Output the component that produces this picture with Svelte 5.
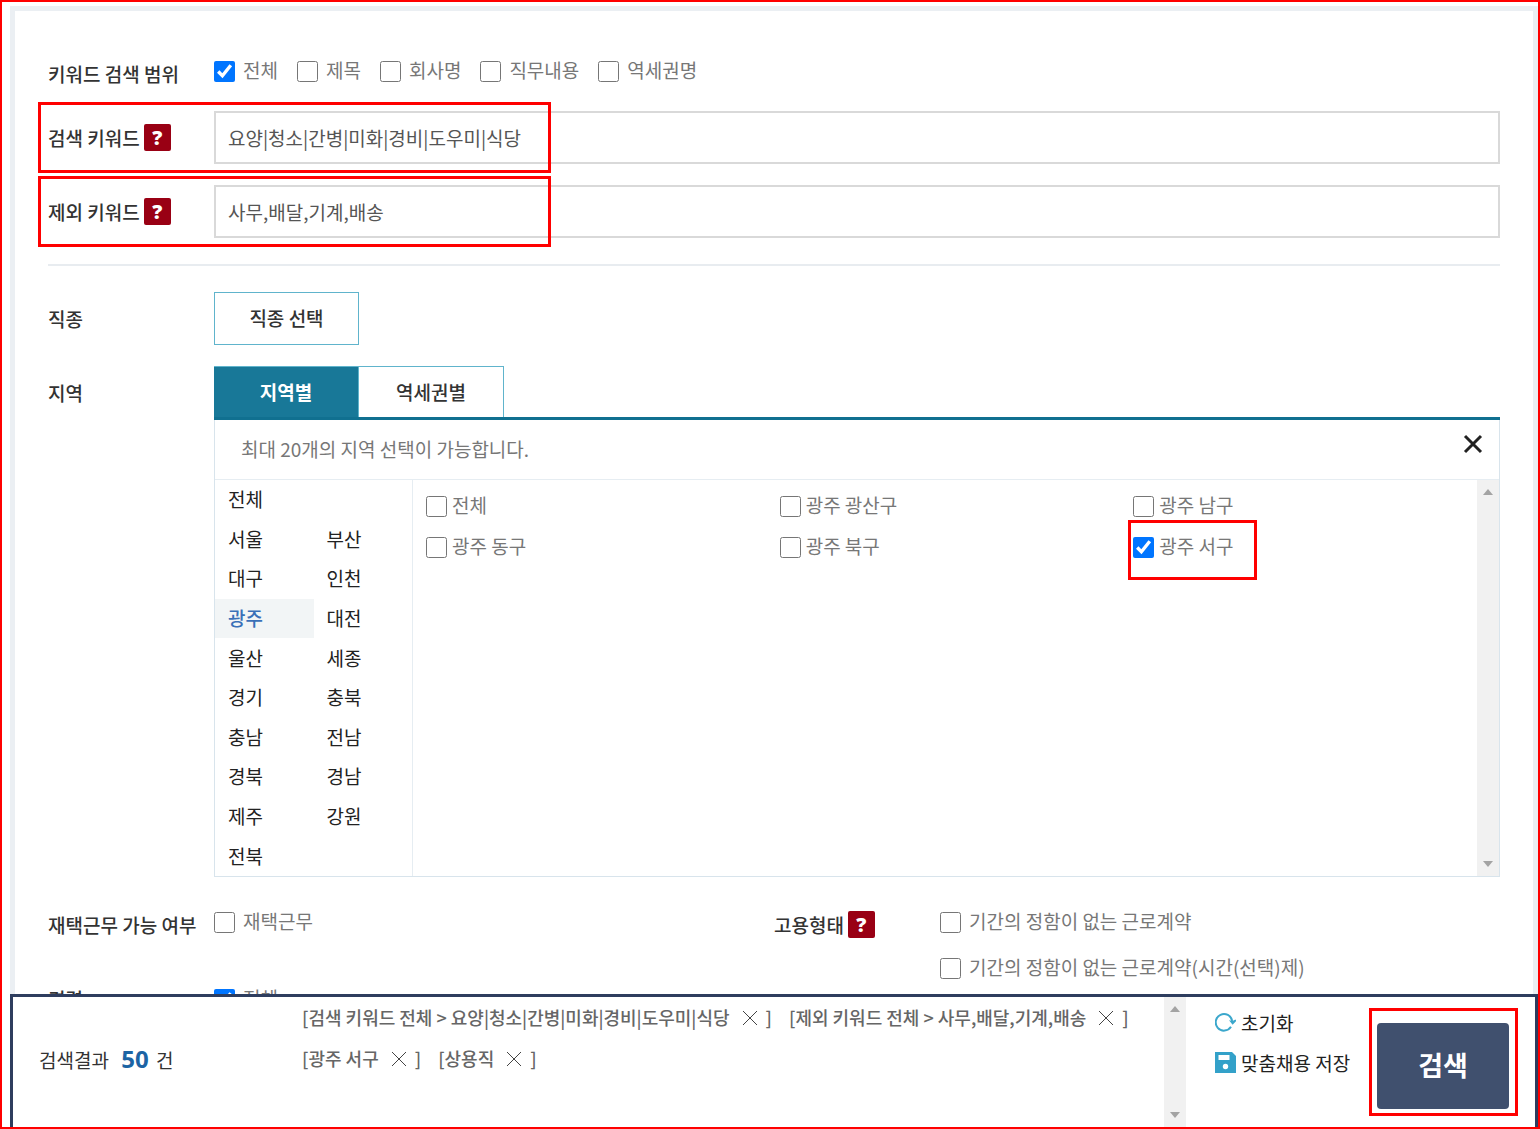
<script>
  let scopes = $state([
    { name: '전체', checked: true },
    { name: '제목', checked: false },
    { name: '회사명', checked: false },
    { name: '직무내용', checked: false },
    { name: '역세권명', checked: false }
  ]);

  let keyword = $state('요양|청소|간병|미화|경비|도우미|식당');
  let excluded = $state('사무,배달,기계,배송');
  let tab = $state('지역별');
  let region = $state('광주');

  const regions = [
    ['전체'],
    ['서울', '부산'],
    ['대구', '인천'],
    ['광주', '대전'],
    ['울산', '세종'],
    ['경기', '충북'],
    ['충남', '전남'],
    ['경북', '경남'],
    ['제주', '강원'],
    ['전북']
  ];

  let districts = $state([
    { name: '전체', checked: false },
    { name: '광주 광산구', checked: false },
    { name: '광주 남구', checked: false },
    { name: '광주 동구', checked: false },
    { name: '광주 북구', checked: false },
    { name: '광주 서구', checked: true, marked: true }
  ]);

  const contracts = ['기간의 정함이 없는 근로계약', '기간의 정함이 없는 근로계약(시간(선택)제)'];

  let tags = $state([
    '검색 키워드 전체 > 요양|청소|간병|미화|경비|도우미|식당',
    '제외 키워드 전체 > 사무,배달,기계,배송',
    '광주 서구',
    '상용직'
  ]);
</script>

{#snippet help()}
  <button class='help' type='button' aria-label='도움말'>?</button>
{/snippet}

{#snippet scrollbar()}
  <div class='scrollbar' aria-hidden='true'>
    <svg width='10' height='6' viewBox='0 0 10 6'><path d='M0 6 5 0l5 6z' /></svg>
    <svg width='10' height='6' viewBox='0 0 10 6'><path d='M0 0h10L5 6z' /></svg>
  </div>
{/snippet}

<div class='frame'>
  <main class='panel'>
    <div class='row row-checks row-scope'>
      <div class='label'>키워드 검색 범위</div>
      <div class='checks'>
        {#each scopes as scope}
          <label class='check'><input type='checkbox' bind:checked={scope.checked} />{scope.name}</label>
        {/each}
      </div>
    </div>

    <div class='row'>
      <div class='label'><label for='keyword'>검색 키워드</label>{@render help()}</div>
      <input class='text' id='keyword' type='text' bind:value={keyword} />
      <div class='mark mark-row'></div>
    </div>

    <div class='row'>
      <div class='label'><label for='excluded'>제외 키워드</label>{@render help()}</div>
      <input class='text' id='excluded' type='text' bind:value={excluded} />
      <div class='mark mark-row'></div>
    </div>

    <hr />

    <div class='row'>
      <div class='label'>직종</div>
      <button class='select-job' type='button'>직종 선택</button>
    </div>

    <div class='row row-region'>
      <div class='label'>지역</div>
      <div class='region'>
        <div class='tabs'>
          {#each ['지역별', '역세권별'] as name}
            <button class='tab' class:active={tab === name} type='button' onclick={() => (tab = name)}>{name}</button>
          {/each}
        </div>
        <div class='region-box'>
          <div class='region-head'>
            <span>최대 20개의 지역 선택이 가능합니다.</span>
            <button class='close' type='button' aria-label='닫기'>
              <svg width='20' height='20' viewBox='0 0 20 20'><path d='M2 2 18 18M18 2 2 18' /></svg>
            </button>
          </div>
          <div class='region-body'>
            <div class='cities'>
              {#each regions as line}
                <div class='cities-line'>
                  {#each line as name}
                    <button class='city' class:active={region === name} type='button' onclick={() => (region = name)}>{name}</button>
                  {/each}
                </div>
              {/each}
            </div>
            <div class='districts'>
              {#each districts as district}
                <div class='district'>
                  <label class='check'><input type='checkbox' bind:checked={district.checked} />{district.name}</label>
                  {#if district.marked}
                    <div class='mark mark-district'></div>
                  {/if}
                </div>
              {/each}
            </div>
            {@render scrollbar()}
          </div>
        </div>
      </div>
    </div>

    <div class='columns'>
      <div class='row row-checks'>
        <div class='label'>재택근무 가능 여부</div>
        <label class='check'><input type='checkbox' />재택근무</label>
      </div>
      <div class='row row-checks'>
        <div class='label'>고용형태{@render help()}</div>
        <div class='contracts'>
          {#each contracts as contract}
            <label class='check'><input type='checkbox' />{contract}</label>
          {/each}
        </div>
      </div>
      <div class='row row-checks row-career'>
        <div class='label'>경력</div>
        <label class='check'><input type='checkbox' checked />전체</label>
      </div>
    </div>
  </main>

  <footer class='bar'>
    <div class='count'>검색결과 <strong>50</strong> 건</div>
    <div class='tags'>
      {#each tags as tag, i}
        <span class='tag'>
          [{tag}
          <button class='tag-remove' type='button' aria-label='삭제' onclick={() => tags.splice(i, 1)}>
            <svg width='14' height='14' viewBox='0 0 14 14'><path d='M0 0 14 14M14 0 0 14' /></svg>
          </button>]
        </span>
      {/each}
    </div>
    {@render scrollbar()}
    <div class='tools'>
      <button class='tool' type='button'>
        <svg width='21' height='21' viewBox='0 0 21 21'>
          <path d='M16 14.800A8.300 8.300 0 1 1 17.200 9' fill='none' stroke='#3ba7cc' stroke-width='2' />
          <path d='M14 8.300 17.500 9 20.500 7.500 21.500 8.800 17.600 12.800z' fill='#3ba7cc' />
        </svg>
        초기화
      </button>
      <button class='tool' type='button'>
        <svg width='21' height='21' viewBox='0 0 21 21'>
          <path d='M0 0h17l4 4v17H0z' fill='#33a1c9' />
          <path d='M3.500 3h11v5h-11z' fill='#fff' />
          <circle cx='10.500' cy='14.500' r='2.700' fill='#fff' />
        </svg>
        맞춤채용 저장
      </button>
    </div>
    <div class='submit'>
      <button class='search' type='submit'>검색</button>
      <div class='mark mark-search'></div>
    </div>
  </footer>
</div>

<style>
  :global(body) {
    margin: 0;
    background-color: #fff;
  }

  .frame {
    display: flex;
    flex-direction: column;
    box-sizing: border-box;
    height: 100vh;
    padding: 4px 0 0 8px;
    border: 2px solid #f00;
    font-family: 'Noto Sans CJK KR', 'Noto Sans', sans-serif;
    font-size: 19px;
    line-height: 27px;
    color: #333;
  }

  button,
  input {
    font: inherit;
    color: inherit;
  }

  button {
    padding: 0 0 2px;
    border: 0;
    background: none;
    cursor: pointer;
  }

  svg {
    display: block;
  }

  .panel {
    flex: 1;
    min-height: 0;
    overflow: hidden;
    padding: 43px 33px 0;
    border: 5px solid #ebeff3;
    border-bottom: 0;
  }

  .row {
    display: grid;
    grid-template-columns: 166px 1fr;
    align-items: center;
    position: relative;
    margin-bottom: 21px;
  }

  .row-checks {
    align-items: start;
    margin-bottom: 0;
  }

  .row-scope {
    padding: 7px 0 8px;
    margin-bottom: 21px;
  }

  .row-region {
    align-items: start;
    margin-bottom: 35px;
  }

  .label {
    display: flex;
    align-items: center;
    gap: 4px;
    font-weight: 500;
    white-space: nowrap;
  }

  .row-checks .label {
    height: 25px;
    margin-bottom: -4px;
  }

  .row-career .label {
    height: 19px;
  }

  .row-region > .label {
    height: 52px;
  }

  .help {
    width: 27px;
    height: 27px;
    padding: 0;
    border-radius: 2px;
    background-color: #990014;
    font-family: 'Open Sans', sans-serif;
    font-weight: 800;
    font-size: 20px;
    line-height: 27px;
    color: #fff;
  }

  .checks {
    display: flex;
    gap: 19px;
  }

  .check {
    display: flex;
    align-items: flex-start;
    gap: 8px;
    height: 21px;
    line-height: 17px;
    color: #777;
    white-space: nowrap;
  }

  .check input {
    flex: none;
    width: 21px;
    height: 21px;
    margin: 0;
  }

  .text {
    box-sizing: border-box;
    width: 100%;
    height: 53px;
    padding: 0 12px;
    border: 2px solid #d9d9d9;
    outline: 0;
    color: #555;
  }

  .mark {
    position: absolute;
    border: 3px solid #f00;
    pointer-events: none;
  }

  .mark-row {
    top: -9px;
    bottom: -9px;
    left: -10px;
    width: 507px;
  }

  hr {
    margin: 26px 0;
    border: 0;
    border-top: 2px solid #e8ecf0;
  }

  .select-job {
    box-sizing: border-box;
    width: 145px;
    height: 53px;
    border: 1px solid #60b4cc;
    font-weight: 500;
  }

  .tabs {
    display: flex;
    height: 51px;
    border-bottom: 3px solid #107090;
  }

  .tab {
    box-sizing: border-box;
    width: 145px;
    border: 1px solid #60b4cc;
    border-width: 1px 1px 0 0;
    font-weight: 500;
  }

  .tab.active {
    background-color: #187898;
    font-weight: 700;
    color: #fff;
  }

  .region-box {
    border: 1px solid #d8e4ec;
    border-top: 0;
  }

  .region-head {
    display: flex;
    justify-content: space-between;
    align-items: center;
    height: 57px;
    padding: 0 16px 2px 26px;
    border-bottom: 1px solid #e6edf2;
    color: #777;
  }

  .close {
    padding-bottom: 10px;
  }

  .close path {
    stroke: #222;
    stroke-width: 3;
  }

  .region-body {
    display: grid;
    grid-template-columns: 198px 1fr 22px;
    height: 396px;
  }

  .cities {
    display: grid;
    grid-auto-rows: 1fr;
    border-right: 1px solid #e6edf2;
    color: #222;
  }

  .cities-line {
    display: grid;
    grid-template-columns: 1fr 1fr;
  }

  .city {
    padding-left: 13px;
    text-align: left;
  }

  .city.active {
    background-color: #f2f5f6;
    font-weight: 500;
    color: #3a70b8;
  }

  .districts {
    display: grid;
    grid-template-columns: repeat(3, 1fr);
    grid-auto-rows: 41px;
    padding: 6px 3px 0 0;
  }

  .district {
    display: flex;
    align-items: center;
    position: relative;
    padding-left: 13px;
  }

  .district .check {
    gap: 5px;
  }

  .mark-district {
    top: -7px;
    left: 8px;
    width: 123px;
    height: 54px;
  }

  .scrollbar {
    box-sizing: border-box;
    display: flex;
    flex-direction: column;
    justify-content: space-between;
    align-items: center;
    width: 22px;
    padding: 9px 0;
    background-color: #f1f1f1;
  }

  .scrollbar path {
    fill: #a3a3a3;
  }

  .columns {
    display: grid;
    grid-template-columns: 1fr 1fr;
    row-gap: 10px;
  }

  .contracts {
    display: grid;
    gap: 25px;
  }

  .bar {
    display: flex;
    box-sizing: border-box;
    height: 133px;
    padding: 0 26px;
    border: 3px solid #2e3d5e;
    border-bottom: 0;
    background-color: #fff;
  }

  .count {
    align-self: center;
    width: 263px;
    padding-bottom: 7px;
    white-space: pre;
  }

  .count strong {
    margin: 0 3px 0 8px;
    font-family: 'Open Sans', sans-serif;
    font-size: 24px;
    color: #1c64a4;
  }

  .tags {
    display: flex;
    flex: 1;
    flex-wrap: wrap;
    align-content: flex-start;
    column-gap: 17px;
    font-size: 18px;
    line-height: 41px;
    color: #666;
  }

  .tag {
    display: flex;
    align-items: center;
    font-weight: 500;
    white-space: nowrap;
  }

  .tag-remove {
    margin: 0 9px 0 13px;
    padding: 0;
  }

  .tag-remove path {
    stroke: #444;
    stroke-width: 1;
  }

  .tools {
    display: flex;
    flex-direction: column;
    gap: 12px;
    width: 191px;
    padding: 12px 0 0 29px;
    box-sizing: border-box;
  }

  .tool {
    display: flex;
    align-items: center;
    gap: 5px;
    padding-bottom: 1px;
    color: #222;
    white-space: nowrap;
  }

  .submit {
    position: relative;
    align-self: center;
    margin-top: 7px;
  }

  .search {
    display: block;
    width: 132px;
    height: 86px;
    border-radius: 4px;
    background-color: #40506e;
    font-size: 27px;
    font-weight: 700;
    color: #fff;
  }

  .mark-search {
    top: -15px;
    right: -9px;
    bottom: -7px;
    left: -8px;
  }
</style>
